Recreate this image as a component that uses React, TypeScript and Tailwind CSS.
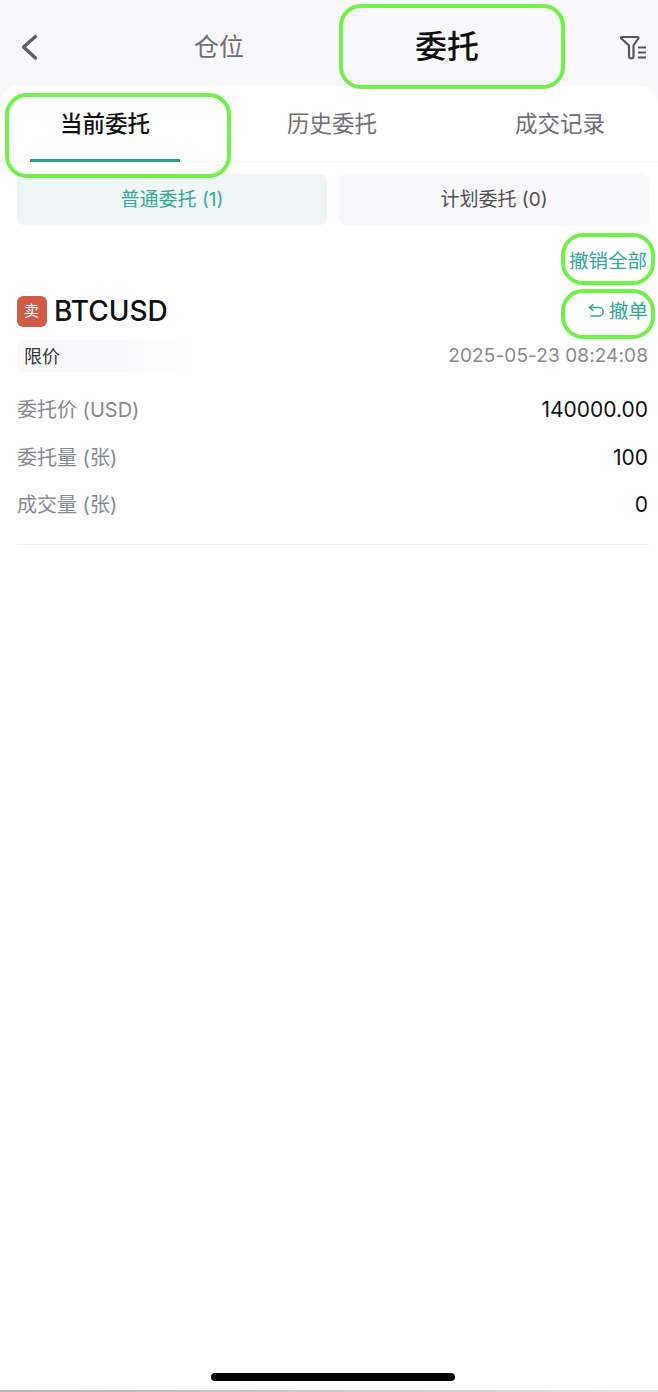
const font = "font-['Inter','Noto_Sans_CJK_SC',sans-serif]";

const rows = [
  { label: "委托价 (USD)", value: "140000.00" },
  { label: "委托量 (张)", value: "100" },
  { label: "成交量 (张)", value: "0" },
];

function Ring({ className }: { className: string }) {
  return <div className={`pointer-events-none absolute rounded-[22px] border-[4px] border-[#70f248] ${className}`} />;
}

function FilterIcon() {
  return (
    <svg width="28" height="26" viewBox="0 0 28 26" fill="none" stroke="#55565b" strokeWidth="2.2" strokeLinejoin="round" strokeLinecap="round">
      <path d="M2 2h15.5c.9 0 1.2.8.7 1.5L13.5 10.5V21.5c0 1.6-1.4 2.2-2.6 1.9-1-.2-1.9-.8-1.9-1.9V10.5L1.3 3.5C.8 2.8 1.1 2 2 2z" />
      <path d="M18 12.5h8M18 17.5h8M18 22.5h8" strokeWidth="2" strokeLinecap="butt" />
    </svg>
  );
}

function UndoIcon() {
  return (
    <svg width="17" height="17" viewBox="0 0 17 17" fill="none" stroke="#33a898" strokeWidth="1.6" strokeLinecap="round" strokeLinejoin="round">
      <path d="M5 1.5 1.5 4.5 5 7.5" />
      <path d="M1.5 4.5h9.5a4 4 0 0 1 0 8.5H3" />
    </svg>
  );
}

export default function App() {
  return (
    <div className={`relative flex h-[1392px] w-[658px] flex-col overflow-hidden bg-[#f9f9fb] ${font}`}>
      <header className="flex h-[86px] shrink-0 items-center pt-[8px]">
        <div className="flex w-[106px] pl-[12px]">
          <svg width="34" height="34" viewBox="0 0 34 34" fill="none" stroke="#5f6066" strokeWidth="3.4" strokeLinecap="round" strokeLinejoin="round">
            <path d="M23.5 6.5 11.5 17l12 11" />
          </svg>
        </div>
        <div className="w-[226px] pt-[2px] text-center text-[25px] text-[#6f7075]">仓位</div>
        <div className="w-[230px] text-center text-[32px] font-medium text-[#111111]">委托</div>
        <div className="flex flex-1 justify-end pr-[10px] pt-[2px]">
          <FilterIcon />
        </div>
      </header>

      <main className="flex flex-1 flex-col rounded-t-[18px] bg-white">
        <nav className="flex h-[76px] shrink-0 border-b border-[#f2f2f4]">
          <div className="relative flex w-[210px] justify-center pt-[21px] text-[22.5px] font-medium leading-[34px] text-[#111111]">
            当前委托
            <div className="absolute bottom-[-1px] left-[30px] h-[3px] w-[150px] bg-[#2f9a88]" />
          </div>
          <div className="flex w-[244px] justify-center pt-[21px] text-[22.5px] leading-[34px] text-[#6f7075]">历史委托</div>
          <div className="flex w-[204px] justify-center pl-[8px] pt-[21px] text-[22.5px] leading-[34px] text-[#6f7075]">成交记录</div>
        </nav>

        <div className="flex gap-[12px] pl-[17px] pr-[9px] pt-[12px]">
          <div className="flex h-[51px] w-[310px] items-center justify-center rounded-[7px] bg-[#eef7f5] pt-[2px] text-[19px] text-[#33a898]">普通委托 (1)</div>
          <div className="flex h-[51px] flex-1 items-center justify-center rounded-[7px] bg-[#f9f9fb] pt-[2px] text-[19px] text-[#4c4d52]">计划委托 (0)</div>
        </div>

        <div className="flex justify-end pr-[11px] pt-[22px] text-[19.5px] leading-[28px] text-[#33a898]">撤销全部</div>

        <div className="flex items-center justify-between pl-[17px] pr-[10px] pt-[20px]">
          <div className="flex items-center gap-[7px]">
            <div className="flex h-[31px] w-[30px] items-center justify-center rounded-[6px] bg-[#cf5c48] pr-[1px] text-[15px] text-white">卖</div>
            <div className="text-[28px] font-medium leading-[32px] text-[#111111]">BTCUSD</div>
          </div>
          <div className="flex items-center gap-[4px] text-[19.5px] leading-[28px] text-[#33a898]">
            <UndoIcon />
            撤单
          </div>
        </div>

        <div className="flex items-center justify-between pl-[17px] pr-[10px] pt-[13px]">
          <div className="flex h-[32px] w-[176px] items-center rounded-l-[7px] bg-gradient-to-r from-[#f9f9fd] via-[#f9f9fd] to-white pl-[7px] text-[18px] text-[#333437]">限价</div>
          <div className="text-[19px] leading-[28px] tracking-[0.1px] text-[#88898e]">2025-05-23 08:24:08</div>
        </div>

        <div className="ml-[17px] mr-[9px] mt-[24px] flex flex-col gap-[19.5px] border-b border-[#f0f0f2] pb-[25px]">
          {rows.map((row) => (
            <div key={row.label} className="flex h-[28px] items-center justify-between">
              <span className="text-[20px] text-[#88898e]">{row.label}</span>
              <span className="mr-[1px] text-[21px] text-[#111111]">{row.value}</span>
            </div>
          ))}
        </div>

        <div className="flex flex-1 flex-col items-center justify-end">
          <div className="mb-[9px] ml-[8px] h-[8px] w-[244px] rounded-full bg-black" />
          <div className="h-[2px] w-full bg-gradient-to-r from-[#b5b5b5] to-[#e2e2e2]" />
        </div>
      </main>

      <Ring className="left-[339px] top-[4px] h-[85px] w-[226px]" />
      <Ring className="left-[5px] top-[93px] h-[85px] w-[226px]" />
      <Ring className="left-[561px] top-[233px] h-[52px] w-[94px]" />
      <Ring className="left-[561px] top-[289px] h-[50px] w-[94px]" />
    </div>
  );
}
